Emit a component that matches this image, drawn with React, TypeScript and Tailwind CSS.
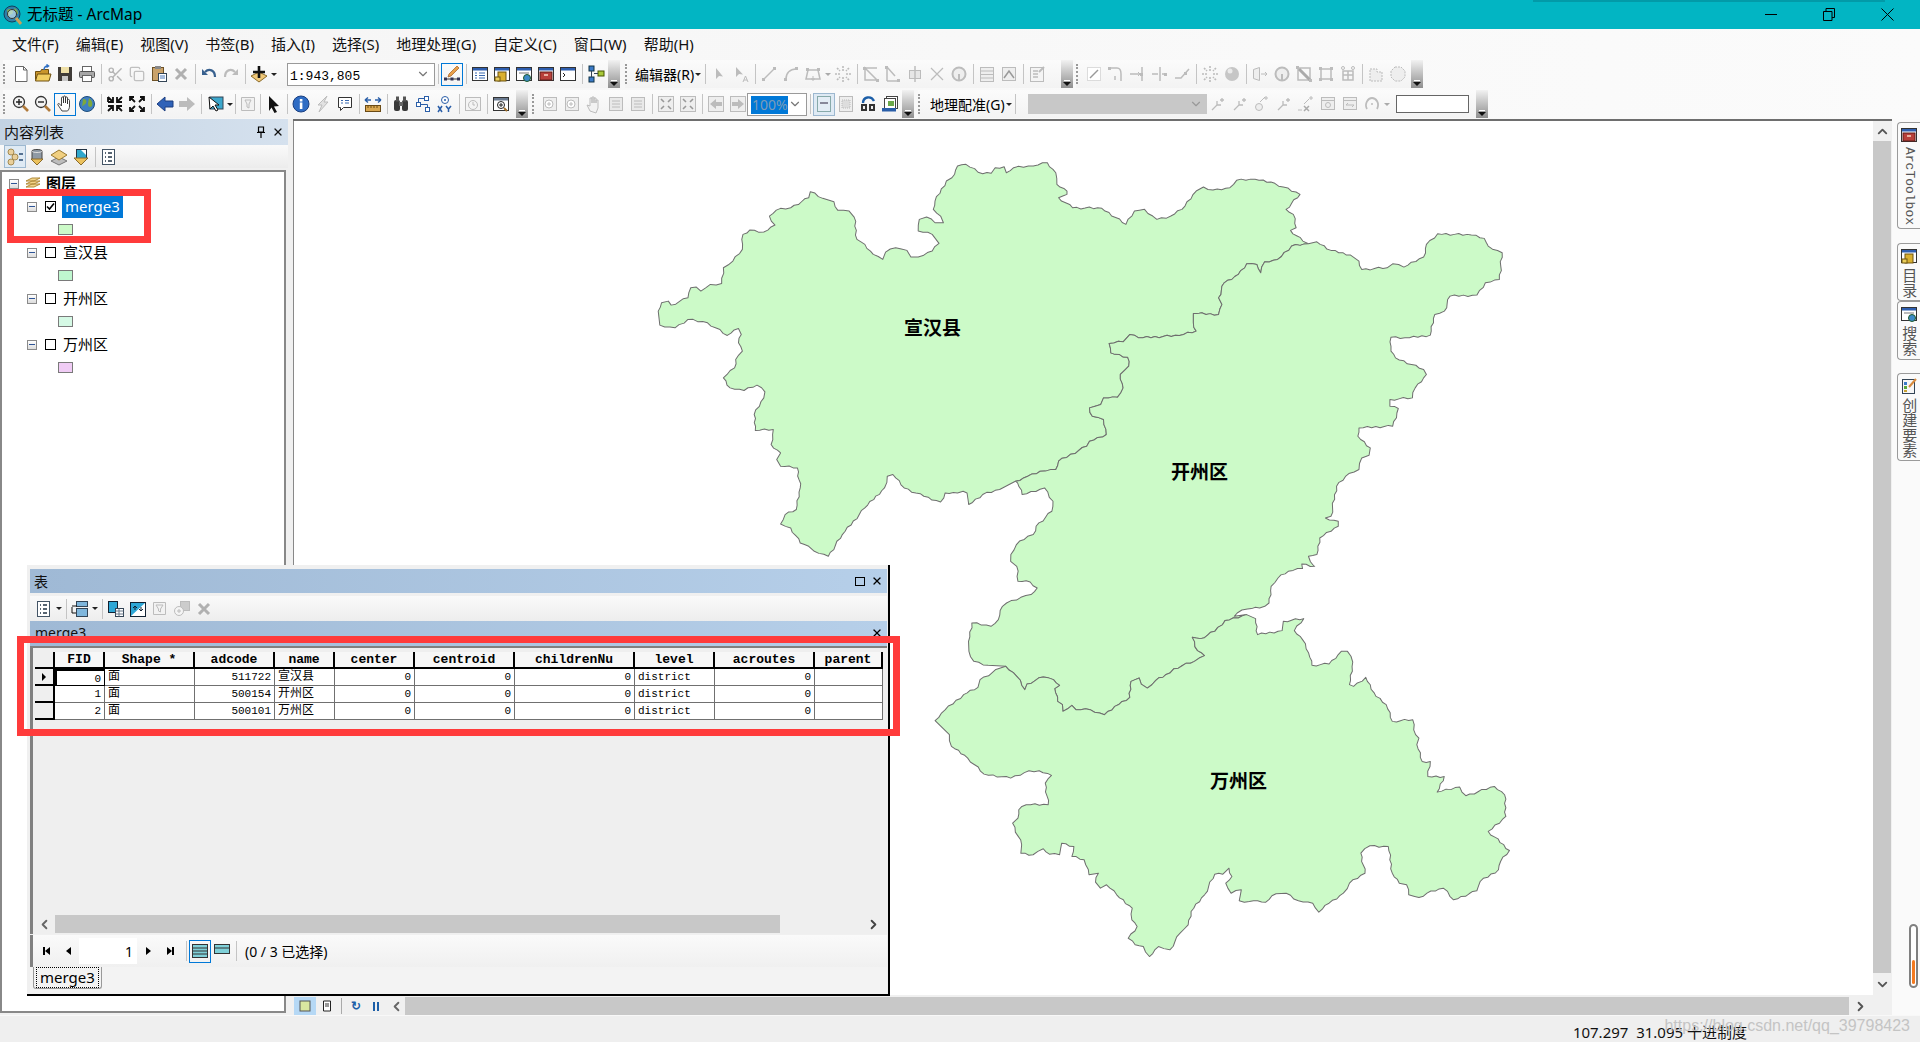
import type { ReactNode } from 'react';
import { ChevronDown, ChevronLeft, ChevronRight, ChevronUp, Copy, Scissors, X } from 'lucide-react';

const G = '#bcbcbc';

const Win = ({ children, top = '#2f5fb0' }: { children?: ReactNode; top?: string }) => (
  <>
    <rect x="2.5" y="3.5" width="15" height="13" fill="#fff" stroke="#333" />
    <rect x="3" y="4" width="14" height="2.5" fill={top} />
    {children}
  </>
);

const NodeLine = ({ d }: { d: string }) => <path d={d} fill="none" stroke={G} strokeWidth="1.5" />;
const Sq = ({ x, y }: { x: number; y: number }) => <rect x={x} y={y} width="3" height="3" fill={G} />;

const Glass = ({ sign }: { sign?: 'in' | 'out' }) => (
  <>
    <circle cx="8" cy="8" r="5.5" fill="#f4f4f4" stroke="#333" strokeWidth="1.3" />
    <path d="M12 12l5 5" stroke="#b07a3a" strokeWidth="2.6" />
    <path d={sign === 'in' ? 'M5 8h6M8 5v6' : 'M5 8h6'} stroke="#222" strokeWidth="1.4" />
  </>
);

const icons: Record<string, ReactNode> = {
  newfile: (<><path d="M4.5 2.5h8l3.5 3.5v11.500H4.500z" fill="#fff" stroke="#666" /><path d="M12.500 2.500v3.500h3.500" fill="none" stroke="#666" /></>),
  open: (<><path d="M2.500 7.500h5l1-2h7v10h-13z" fill="#c9962c" stroke="#6e4f10" /><path d="M2.500 17l2-7h13.500l-2 7z" fill="#f1cf62" stroke="#6e4f10" /><path d="M11 6c0-3 2-4 4-4M13.500 0.500l2 1.500-2 1.500" fill="none" stroke="#2e6fc4" strokeWidth="1.500" /></>),
  save: (<><rect x="3" y="3" width="14" height="14" fill="#403c38" /><rect x="6" y="3" width="8" height="6" fill="#efe0a8" /><rect x="7" y="12" width="6" height="5" fill="#c8c8c8" /></>),
  print: (<><rect x="5.500" y="2.500" width="9" height="5" fill="#fff" stroke="#666" /><rect x="2.500" y="7.500" width="15" height="6" rx="1" fill="#a8a8a8" stroke="#555" /><rect x="5.500" y="11.500" width="9" height="6" fill="#fff" stroke="#666" /></>),
  paste: (<><rect x="3.500" y="3.500" width="11" height="13" fill="#c9a26a" stroke="#6e5226" /><rect x="6" y="2" width="6" height="3" fill="#888" /><rect x="9.500" y="9.500" width="8" height="8" fill="#fff" stroke="#345" /><path d="M11 12h5M11 14h5" stroke="#4a78b8" /></>),
  del: <path d="M5 5l10 10M15 5L5 15" stroke="#b0b0b0" strokeWidth="3" />,
  undo: (<><path d="M6 8c4-4 10-2 10 5" fill="none" stroke="#39618f" strokeWidth="2.200" /><path d="M3 5v6h6z" fill="#39618f" /></>),
  redo: (<><path d="M14 8c-4-4-10-2-10 5" fill="none" stroke={G} strokeWidth="2.200" /><path d="M17 5v6h-6z" fill={G} /></>),
  add: (<><path d="M10 8l8 4-8 6-8-6z" fill="#f0c878" stroke="#8a6a2a" /><path d="M10 2v12M4 8h12" stroke="#111" strokeWidth="2.600" /></>),
  edit: (<><path d="M3 15h14" stroke="#333" /><rect x="2" y="13.500" width="3" height="3" fill="#335" /><rect x="8.500" y="13.500" width="3" height="3" fill="#335" /><rect x="15" y="13.500" width="3" height="3" fill="#335" /><path d="M7 10l8-8 2 2-8 8-3 1z" fill="#e9a04a" stroke="#a05a20" strokeWidth="0.700" /></>),
  toc: (<Win><path d="M5 9h2M9 9h6M5 11.500h2M9 11.500h6M5 14h2M9 14h6" stroke="#3a6ab0" /></Win>),
  cat: (<Win><rect x="6" y="8" width="8" height="9" fill="#d9b030" stroke="#6e5510" /><rect x="3" y="13" width="5" height="4" fill="#e9cd5a" stroke="#6e5510" /></Win>),
  search: (<Win><rect x="5" y="8" width="10" height="2" fill="#bbb" /><circle cx="13" cy="14" r="3.500" fill="#3c8ac8" stroke="#1d5a2a" /></Win>),
  tool: (<Win><rect x="4" y="8" width="12" height="8" fill="#b8403a" stroke="#601c18" /><rect x="8" y="10" width="4" height="2" fill="#e8b0a0" /></Win>),
  py: (<Win><path d="M5 9l2 2-2 2" fill="none" stroke="#222" /></Win>),
  model: (<><rect x="3" y="2" width="5" height="5" fill="#3a7ac8" stroke="#134" /><rect x="3" y="13" width="5" height="5" fill="#3a7ac8" stroke="#134" /><rect x="12" y="7" width="6" height="5" fill="#a8c838" stroke="#450" /><path d="M5.500 7v6M8 9.500h4" stroke="#345" /></>),
  tocdraw: (<><circle cx="6" cy="5" r="3" fill="#e9cf9a" stroke="#a58a50" /><circle cx="10" cy="10" r="3" fill="#e9cf9a" stroke="#a58a50" /><circle cx="6" cy="15" r="3" fill="#e9cf9a" stroke="#a58a50" /><path d="M14 7h4M14 13h4" stroke="#2a4a70" strokeWidth="1.500" /></>),
  dbase: (<><path d="M5 4c0-2 10-2 10 0v8c0 2-10 2-10 0z" fill="#8f9aa5" stroke="#444" /><path d="M5 4c0 2 10 2 10 0" fill="none" stroke="#ddd" /><path d="M4 12h12l-6 6z" fill="#ecc25e" stroke="#8a6a2a" /></>),
  dbase2: (<><path d="M10 10l8 4-8 4-8-4z" fill="#bdbdbd" stroke="#777" /><path d="M10 3l8 5-8 5-8-5z" fill="#f0cf80" stroke="#9a7a30" /></>),
  dbase3: (<><rect x="5.500" y="2.500" width="10" height="10" fill="#30a8cc" stroke="#234" /><path d="M10 3h5v5z" fill="#fff" /><path d="M3 11h14l-7 7z" fill="#ecc25e" stroke="#8a6a2a" /></>),
  dform2: (<><rect x="3.500" y="3.500" width="12" height="14" fill="#f6f6f6" stroke="#345" /><rect x="5" y="6" width="3" height="3" fill="#3a7ac8" /><rect x="5" y="10" width="3" height="3" fill="#5aa83c" /><rect x="5" y="14" width="3" height="2" fill="#c8a030" /><path d="M10 11l7-8" stroke="#d88a3c" strokeWidth="2" /></>),
  zoomin: <Glass sign="in" />,
  zoomout: <Glass sign="out" />,
  hand: <path d="M7 17l-4-6c-.7-1.500.8-2 1.800-.8L6.500 12V4c0-1.500 2-1.500 2 0v5-6c0-1.500 2-1.500 2 0v6-5c0-1.500 2-1.500 2 0v6-3.500c0-1.400 2-1.400 2 0V12c0 2.500-1 4-2 5z" fill="#fff" stroke="#333" strokeWidth="0.900" />,
  globe: (<><circle cx="10" cy="10" r="7.500" fill="#3f7fc2" stroke="#1c4c7c" /><path d="M6 5c3 0 4 2 3 4s-4 2-4 5M12 4c3 2 4 5 3 8-2 2-4 1-4-2s1-4 1-6z" fill="#7da83c" /></>),
  fin: <path d="M3 3l5 5M3 8V3h0M8 3v5H3M17 3l-5 5M12 3v5h5M3 17l5-5M3 12h5v5M17 17l-5-5M17 12h-5v5" fill="none" stroke="#111" strokeWidth="1.800" />,
  fout: <path d="M8 8L3 3M3 7V3h4M12 8l5-5M17 7V3h-4M8 12l-5 5M3 13v4h4M12 12l5 5M17 13v4h-4" fill="none" stroke="#111" strokeWidth="1.800" />,
  back: <path d="M2 10l8-7v4h8v6h-8v4z" fill="#2f62b8" stroke="#1c3e80" />,
  fwd: <path d="M18 10l-8-7v4H2v6h8v4z" fill={G} />,
  selel: (<><rect x="5" y="3" width="13" height="12" fill="#3ca7cc" stroke="#345" /><path d="M4 3l1 12 3-3 3 5 2-1-3-5h4z" fill="#fff" stroke="#111" /></>),
  filt: <path d="M3.500 3.500h13v13h-13zM7 6h6l-2 4v4l-2-1v-3z" fill="#f2f2f2" stroke={G} />,
  arrow: <path d="M6 2l10 10-5 .5 3 5.500-2.500 1-3-5.500L6 17z" fill="#111" />,
  info: (<><circle cx="10" cy="10" r="8" fill="#2e6cc4" stroke="#1a3f80" /><rect x="8.800" y="8.500" width="2.600" height="6.500" fill="#fff" /><rect x="8.800" y="5" width="2.600" height="2.500" fill="#fff" /></>),
  bolt: <path d="M14 2L5 11h4l-3 7 9-10h-4z" fill="#e2e2e2" stroke={G} />,
  msg: (<><path d="M3.500 3.500h13v10h-8l-3 3v-3h-2z" fill="#fff" stroke="#333" /><path d="M6 6.500h2M10 6.500h4M6 9h2M10 9h4" stroke="#3a6ab0" /></>),
  measure: (<><path d="M2 6h6M12 6h6M2 6l3-2.500M2 6l3 2.500M18 6l-3-2.500M18 6l-3 2.500" fill="none" stroke="#2a5ea8" strokeWidth="1.500" /><rect x="2.500" y="11.500" width="15" height="6" fill="#d9a750" stroke="#6a4a15" /><path d="M5 12v2M8 12v2M11 12v2M14 12v2" stroke="#6a4a15" /></>),
  bino: (<><rect x="3" y="6" width="6" height="11" rx="2" fill="#3a3a3a" /><rect x="11" y="6" width="6" height="11" rx="2" fill="#3a3a3a" /><rect x="5" y="2.500" width="3" height="5" fill="#555" /><rect x="12" y="2.500" width="3" height="5" fill="#555" /><rect x="8" y="8" width="4" height="4" fill="#666" /></>),
  route: (<><rect x="11.500" y="2.500" width="4" height="4" fill="#fff" stroke="#2a5ea8" /><rect x="3.500" y="8.500" width="4" height="4" fill="#fff" stroke="#2a5ea8" /><rect x="12.500" y="13.500" width="4" height="4" fill="#fff" stroke="#2a5ea8" /><path d="M5.500 8.500V4.500h6M7.500 10.500h7v3" fill="none" stroke="#2a5ea8" /></>),
  xy: (<><circle cx="10" cy="6" r="3.500" fill="#fff" stroke="#2a5ea8" /><circle cx="10" cy="6" r="1" fill="#2a5ea8" /><path d="M3 12l4 6M7 12l-4 6M11 12l2.500 3 2.500-3M13.500 15v3" fill="none" stroke="#2a5ea8" strokeWidth="1.500" /></>),
  clock: (<><rect x="2.500" y="3.500" width="15" height="13" fill="#f4f4f4" stroke={G} /><circle cx="10" cy="11" r="4.500" fill="none" stroke={G} /><path d="M10 8v3h2" fill="none" stroke={G} /></>),
  winzoom: (<Win top="#6a7a90"><circle cx="10" cy="11" r="3.500" fill="#fff" stroke="#222" /><path d="M8 11h4M10 9v4" stroke="#222" /><path d="M13 14l3 3" stroke="#a0702a" strokeWidth="2" /></Win>),
  dzi: (<><rect x="3.500" y="3.500" width="13" height="13" fill="#eee" stroke={G} /><circle cx="9" cy="10" r="4" fill="#fff" stroke={G} /><path d="M7 10h4M9 8v4" stroke={G} /></>),
  dhand: <path d="M6 17L3 11l3 1V4h2v5-6h2v6-5h2v5-3h2v8l-2 5z" fill="#f2f2f2" stroke={G} />,
  dbox: (<><rect x="3.500" y="3.500" width="13" height="13" fill="#e9e9e9" stroke={G} /><path d="M6 7h8M6 10h8M6 13h8" stroke={G} /></>),
  dfin: (<><rect x="2.500" y="2.500" width="15" height="15" fill="#eee" stroke={G} /><path d="M5 5l3 3M15 5l-3 3M5 15l3-3M15 15l-3-3" stroke="#999" strokeWidth="1.600" /></>),
  dback: (<><rect x="2.500" y="2.500" width="15" height="15" fill="#eee" stroke={G} /><path d="M4 10l6-5v3h6v4h-6v3z" fill={G} /></>),
  dfwd: (<><rect x="2.500" y="2.500" width="15" height="15" fill="#eee" stroke={G} /><path d="M16 10l-6-5v3H4v4h6v3z" fill={G} /></>),
  layout: (<><rect x="3.500" y="2.500" width="13" height="15" fill="#e4edf5" stroke="#8aa" /><rect x="6" y="8" width="8" height="2" fill="#889" /></>),
  dlayout: (<><rect x="3.500" y="2.500" width="13" height="15" fill="#eee" stroke={G} /><rect x="6" y="6" width="8" height="8" fill="#ddd" stroke={G} strokeDasharray="1 1" /></>),
  lock: (<><path d="M5 9c0-6 8-8 11-2" fill="none" stroke="#1d5fa8" strokeWidth="2.400" /><rect x="3" y="10" width="6" height="7" fill="#333" /><rect x="11" y="10" width="6" height="7" fill="#333" /><rect x="5" y="12" width="2" height="3" fill="#eee" /><rect x="13" y="12" width="2" height="3" fill="#eee" /></>),
  pages: (<><rect x="6.500" y="2.500" width="11" height="12" fill="#fff" stroke="#444" /><rect x="4.500" y="4.500" width="11" height="10" fill="#fff" stroke="#444" /><rect x="8" y="7" width="6" height="5" fill="#6ba84a" /><rect x="2" y="14" width="14" height="3.500" fill="#2a5ea8" /></>),
  dcursor: <path d="M7 4v11l3-3 4 .5z" fill={G} />,
  dcursora: (<><path d="M5 3v10l3-3 4 .5z" fill={G} /><path d="M12 18l2.500-6 2.500 6M13 16h3" fill="none" stroke={G} /></>),
  dline: (<><NodeLine d="M5 15L15 5" /><Sq x={3} y={14} /><Sq x={14} y={3} /></>),
  darc: (<><NodeLine d="M5 15C5 9 9 5 15 5" /><Sq x={3} y={14} /><Sq x={14} y={3} /></>),
  dpoly: (<><NodeLine d="M5 6h10l2 9H3z" /><Sq x={3} y={4} /><Sq x={14} y={4} /><path d="M10 12v5M8 15h4" stroke={G} /></>),
  dstar: <path d="M10 2v5M10 13v5M2 10h5M13 10h5M4 4l3 3M16 4l-3 3M4 16l3-3M16 16l-3-3" stroke={G} strokeWidth="1.600" strokeDasharray="2 1" />,
  dtri: (<><NodeLine d="M4 4l12 12H4zM4 4h12" /><Sq x={2} y={3} /><Sq x={15} y={15} /></>),
  dsplit: (<><NodeLine d="M4 3v14M4 3l8 9M4 17h12" /><Sq x={14} y={15} /><Sq x={2} y={2} /></>),
  dcross: (<><rect x="4.500" y="6.500" width="11" height="8" fill="#e6e6e6" stroke={G} /><path d="M10 2v16" stroke={G} strokeWidth="1.500" /></>),
  dx: <path d="M4 16L16 4M4 4l12 12" stroke={G} strokeWidth="1.200" />,
  dcurve: (<><circle cx="10" cy="10" r="6.500" fill="#eee" stroke={G} strokeWidth="2" /><path d="M10 10v7" stroke={G} strokeWidth="2" /></>),
  dtable: (<><rect x="3.500" y="3.500" width="13" height="14" fill="#eee" stroke={G} /><path d="M3.500 7h13M3.500 10.500h13M3.500 14h13" stroke={G} /></>),
  dpeak: (<><rect x="3.500" y="3.500" width="13" height="13" fill="#eee" stroke={G} /><path d="M5 14l5-7 5 7" fill="none" stroke="#999" strokeWidth="1.500" /></>),
  dform: (<><rect x="3.500" y="3.500" width="13" height="14" fill="#f4f4f4" stroke={G} /><path d="M6 7h5M6 10h5M6 13h5" stroke={G} strokeWidth="1.500" /><path d="M12 8l5-5" stroke={G} strokeWidth="2" /></>),
  ddot: (<><rect x="3.500" y="3.500" width="13" height="13" fill="#fff" stroke={G} strokeDasharray="1 1" /><path d="M6 14l8-8" stroke="#999" strokeWidth="1.500" /></>),
  dcorner: (<><NodeLine d="M3 4h8c3 0 4 3 4 6v7M9 12v4" /><Sq x={2} y={3} /></>),
  dext: (<><NodeLine d="M2 10h10M14 3v14" /><Sq x={12} y={9} /><path d="M10 8l2 2-2 2" stroke={G} fill="none" /></>),
  dtrim: (<><NodeLine d="M2 10h6M12 10h4M10 3v14" /><Sq x={14} y={9} /></>),
  dangle: (<><NodeLine d="M3 14h6l8-9" /><Sq x={12} y={8} /></>),
  dball: (<><circle cx="10" cy="10" r="7" fill="#c6c6c6" /><circle cx="8" cy="7" r="2.500" fill="#eaeaea" /></>),
  dflip: (<><path d="M3.500 5.500l6-2v13l-6-2z" fill="#eee" stroke={G} /><path d="M11 10h6M15 8l2 2-2 2" stroke={G} fill="none" /></>),
  dpencil: (<><NodeLine d="M4 4h12v12H4z" /><path d="M5 5l11 11" stroke="#aaa" strokeWidth="3" /><Sq x={2} y={2} /><Sq x={15} y={15} /></>),
  dfour: (<><NodeLine d="M5 5h10v10H5z" /><Sq x={3} y={3} /><Sq x={14} y={3} /><Sq x={3} y={14} /><Sq x={14} y={14} /></>),
  dcup: (<><NodeLine d="M5 7h10v9H5zM10 7v9M5 11h10" /><circle cx="5" cy="4" r="1.500" fill="none" stroke={G} /><circle cx="15" cy="4" r="1.500" fill="none" stroke={G} /></>),
  dmerge: <path d="M4 5h7v3h5v9H4z" fill="#eee" stroke={G} strokeDasharray="2 1" />,
  doct: <path d="M7 3h6l4 4v6l-4 4H7l-4-4V7z" fill="#eee" stroke={G} strokeDasharray="2 1" />,
  dgeo: <path d="M4 16l5-5M9 11V7M9 11h4M14 4v4M12 6h4" stroke={G} strokeWidth="1.300" fill="none" />,
  dgeoz: (<><path d="M8 8l5-5M14 2v4M12 4h4" stroke={G} fill="none" /><circle cx="7" cy="13" r="3.500" fill="#eee" stroke={G} /></>),
  dgeox: (<><path d="M8 10l5-5M15 2v4M13 4h4M2 16h4" stroke={G} fill="none" /><path d="M8 12l5 5M13 12l-5 5" stroke="#aaa" strokeWidth="1.500" /></>),
  dcal: (<><rect x="3.500" y="3.500" width="13" height="12" fill="#eee" stroke={G} /><path d="M3.500 6.500h13" stroke={G} /><circle cx="10" cy="11" r="2.500" fill="none" stroke={G} /></>),
  dcal2: (<><rect x="3.500" y="3.500" width="13" height="12" fill="#eee" stroke={G} /><path d="M3.500 6.500h13M6 11h8M6 11l2-2M14 11l-2 2" stroke={G} fill="none" /></>),
  drot: (<><path d="M5 15c-3-5 1-11 5-11s8 5 5 11" fill="none" stroke={G} strokeWidth="1.800" /><circle cx="10" cy="10" r="1" fill={G} /></>),
  tlist: (<><rect x="3.500" y="2.500" width="12" height="15" fill="#fff" stroke="#456" /><path d="M6 6h1M9 6h4M6 10h1M9 10h4M6 14h1M9 14h4" stroke="#234" strokeWidth="1.300" /></>),
  trel: (<><rect x="6.500" y="2.500" width="11" height="5" fill="#7fb6dc" stroke="#345" /><rect x="6.500" y="9.500" width="11" height="8" fill="#7fb6dc" stroke="#345" /><path d="M2 7h5M6 14H2V8" fill="none" stroke="#111" /></>),
  tsel: (<><rect x="2.500" y="2.500" width="9" height="11" fill="#2ea7d6" stroke="#123" /><rect x="9.500" y="9.500" width="8" height="8" fill="#fff" stroke="#345" /><path d="M9.500 12h8M9.500 15h8M13 9.500v8" stroke="#678" /></>),
  tsw: (<><rect x="2.500" y="3.500" width="15" height="14" fill="#2ea7d6" stroke="#123" /><path d="M3 17L17 4V17z" fill="#fff" /><path d="M7 11V7M5 9l2-2 2 2M13 8v4M11 10l2 2 2-2" fill="none" stroke="#123" /></>),
  tfilt: <path d="M3.500 3.500h12v12h-12zM6 6h7l-2.500 4v3l-2-1v-2z" fill="#f2f2f2" stroke={G} />,
  tzoom: (<><rect x="8.500" y="2.500" width="9" height="9" fill="#ccc" stroke={G} /><circle cx="7" cy="12" r="4.500" fill="#f4f4f4" stroke={G} /><path d="M5 12h4M7 10v4" stroke={G} /></>),
  pdata: (<><rect x="2.500" y="3.500" width="15" height="13" fill="#7fd0d8" stroke="#333" /><path d="M2.500 7h15M2.500 10h15M2.500 13h15" stroke="#333" /></>),
  psel: (<><rect x="2.500" y="3.500" width="15" height="9" fill="#7fd0d8" stroke="#333" /><path d="M2.500 7h15" stroke="#333" /></>),
};

const Ico = ({ n }: { n: string }) => {
  if (n === 'cut') return <Scissors size={17} color="#b5b5b5" />;
  if (n === 'copy') return <Copy size={16} color="#c0c0c0" />;
  return (
    <svg width="20" height="20" viewBox="0 0 20 20">
      {icons[n]}
    </svg>
  );
};

const Sep = ({ narrow }: { narrow?: boolean }) => (
  <div className={`flex h-full shrink-0 items-center justify-center ${narrow ? 'w-[3px]' : 'w-[6px]'}`}>
    <div className="h-[20px] w-px bg-[#c4c4c4]" />
  </div>
);

const Caret = () => (
  <div className="flex w-[8px] shrink-0 items-center justify-center">
    <div className="h-0 w-0 border-x-[3px] border-t-[3px] border-x-transparent border-t-[#222]" />
  </div>
);

const GrayCaret = () => (
  <div className="flex w-[8px] shrink-0 items-center justify-center">
    <div className="h-0 w-0 border-x-[3px] border-t-[3px] border-x-transparent border-t-[#aaa]" />
  </div>
);

const Btn = ({ n, active, soft }: { n: string; active?: boolean; soft?: boolean }) => (
  <div
    className={`flex h-[23px] w-[22px] shrink-0 items-center justify-center ${active ? 'border border-[#0078d7]' : ''} ${soft ? 'border border-[#9db8d0] bg-[#dfeaf4]' : ''}`}
  >
    <Ico n={n} />
  </div>
);

// tokens: name = icon, | = separator, ! = narrow separator, v = caret, w = grey caret, * on the end = pressed, ~ = pressed and disabled
const Tools = ({ list }: { list: string }) => (
  <>
    {list.split(' ').map((t, i) => {
      if (t === '|') return <Sep key={i} />;
      if (t === '!') return <Sep key={i} narrow />;
      if (t === 'v') return <Caret key={i} />;
      if (t === 'w') return <GrayCaret key={i} />;
      if (t.endsWith('*')) return <Btn key={i} n={t.slice(0, -1)} active />;
      if (t.endsWith('~')) return <Btn key={i} n={t.slice(0, -1)} soft />;
      return <Btn key={i} n={t} />;
    })}
  </>
);

const Dots = () => (
  <div className="flex h-full w-[7px] shrink-0 items-center">
    <div className="h-[20px] border-l-2 border-dotted border-[#999]" />
  </div>
);

const Grip = () => (
  <div className="ml-auto flex h-full w-[12px] shrink-0 flex-col items-center justify-end bg-linear-to-b from-[#f2f2f2] to-[#8f8f8f] pb-[2px]">
    <div className="mb-px h-px w-[6px] bg-white" />
    <div className="h-0 w-0 border-x-[4px] border-t-[4px] border-x-transparent border-t-[#111]" />
  </div>
);

const Chunk = ({ className, children }: { className: string; children: ReactNode }) => (
  <div className={`flex h-full shrink-0 items-center bg-linear-to-b from-[#fbfbfb] to-[#f3f3f3] ${className}`}>{children}</div>
);

const Combo = ({ className, children }: { className: string; children?: ReactNode }) => (
  <div className={`flex shrink-0 items-center border border-[#9a9a9a] bg-white ${className}`}>
    <div className="flex-1 overflow-hidden">{children}</div>
    <ChevronDown size={14} color="#777" className="mr-[4px]" />
  </div>
);

const menus = ['文件(F)', '编辑(E)', '视图(V)', '书签(B)', '插入(I)', '选择(S)', '地理处理(G)', '自定义(C)', '窗口(W)', '帮助(H)'];

const layers = [
  { name: '宣汉县', color: 'bg-[#bff7cf]' },
  { name: '开州区', color: 'bg-[#d5f9e5]' },
  { name: '万州区', color: 'bg-[#f0ccf5]' },
];

const Minus = () => (
  <div className="flex h-[10px] w-[10px] shrink-0 items-center justify-center border border-[#8a8a8a] bg-linear-to-b from-white to-[#dcdcdc]">
    <div className="h-px w-[6px] bg-[#2f5597]" />
  </div>
);

const Patch = ({ color }: { color: string }) => <div className={`ml-[58px] h-[11px] w-[15px] border border-[#7a7a7a] ${color}`} />;

// outlines traced off the reference, first block in 880x420 crop units, second in 640x400 crop units
const north = [[32,480],[38,455],[50,450],[55,462],[85,440],[90,410],[100,408],[108,420],[125,400],[145,397],[148,350],[165,330],[182,295],[183,250],[195,237],[220,243],[240,222],[230,195],[250,172],[268,170],[300,140],[303,122],[325,142],[345,152],[352,178],[372,180],[381,198],[386,265],[400,280],[415,310],[432,325],[437,303],[455,290],[475,298],[482,318],[495,318],[520,300],[532,277],[520,250],[495,240],[497,205],[510,198],[525,215],[540,215],[535,195],[522,175],[525,150],[545,90],[555,80],[565,45],[580,40],[610,68],[625,67],[632,50],[648,47],[652,65],[665,50],[700,45],[725,35],[740,65],[742,100],[760,120],[760,130],[745,140],[770,170],[822,172],[865,220],[880,180],[898,175],[920,205],[945,195],[970,165],[990,120],[1003,108],[1020,117],[1050,110],[1062,88],[1095,85],[1130,97],[1175,130],[1150,175],[1163,190],[1168,230],[1158,238],[1180,270]];
const shared = [[1190,278],[1160,285],[1135,325],[1112,332],[1105,365],[1098,340],[1080,338],[1065,370],[1040,395],[1030,440],[1036,460],[1030,490],[985,487],[985,515],[990,540],[960,553],[895,560],[872,550],[860,572],[835,577],[838,605],[868,618],[870,645],[855,670],[860,710],[850,738],[825,740],[820,760],[800,770],[805,795],[825,805],[830,850],[800,870],[795,885],[745,930],[740,955],[712,960],[690,975],[668,990]];
const south = [[640,1015],[610,1030],[585,1060],[582,1025],[575,1020],[565,1025],[543,1025],[535,1052],[505,1035],[470,1010],[450,970],[440,975],[435,1010],[400,1070],[360,1150],[335,1215],[310,1200],[300,1185],[285,1175],[268,1130],[250,1118],[258,1090],[278,1075],[285,1010],[280,950],[250,945],[243,925],[250,905],[233,880],[237,835],[205,838],[203,790],[220,740],[222,722],[208,702],[185,718],[160,710],[148,680],[168,650],[170,625],[182,600],[175,575],[180,550],[175,532],[155,553],[120,515],[85,505],[62,530],[35,522]];
const kaiEast = [[1205,272],[1230,298],[1265,312],[1280,330],[1285,355],[1330,350],[1340,338],[1360,348],[1395,318],[1400,280],[1420,248],[1480,252],[1503,262],[1510,285],[1535,305],[1530,385],[1505,395],[1490,432],[1442,435],[1432,480],[1415,490],[1407,552],[1370,560],[1337,558],[1337,600],[1345,620],[1395,655],[1400,670],[1380,710],[1375,740],[1335,745],[1335,765],[1350,772],[1340,825],[1280,830],[1278,855],[1300,890],[1298,912],[1285,920],[1280,955],[1262,967],[1240,1005],[1230,1095],[1220,1100],[1243,1110],[1243,1125],[1210,1160],[1205,1210],[1190,1215],[1200,1245]];
const kaiWest = [[660,1210],[670,1180],[690,1155],[700,1150],[705,1125],[733,1080],[735,1050],[720,1010],[680,1030],[672,995]];
const border2 = [[258,315],[285,345],[305,385],[310,368],[350,347],[375,355],[390,372],[378,382],[385,420],[397,430],[398,450],[420,432],[430,445],[465,445],[500,460],[525,435],[562,408],[565,360],[585,350],[590,368],[605,380],[625,358],[660,335],[670,322],[720,300],[745,283],[728,268],[715,228],[735,232],[770,210],[795,178],[848,160]];
const kaiLowW = [[270,0],[285,15],[288,60],[318,62],[335,80],[320,100],[295,108],[260,125],[250,135],[240,175],[222,195],[175,185],[167,240],[168,270],[180,300],[215,312]];
const kaiLowE = [[818,165],[825,155],[850,143],[880,140],[903,125],[908,75],[925,50],[950,30],[985,22],[983,8],[1015,15]];
const wanWest = [[85,478],[110,445],[155,400],[190,378],[195,355],[245,320]];
const wanRest = [[870,172],[875,220],[935,208],[938,180],[988,172],[965,208],[985,235],[1000,275],[1008,312],[1050,308],[1080,270],[1095,270],[1108,302],[1100,370],[1110,375],[1140,348],[1165,405],[1190,430],[1205,480],[1255,475],[1262,520],[1270,530],[1265,550],[1278,600],[1298,600],[1292,645],[1332,645],[1315,692],[1370,677],[1385,703],[1455,675],[1480,700],[1483,765],[1440,810],[1492,867],[1470,900],[1465,925],[1420,960],[1412,988],[1355,1015],[1330,980],[1290,995],[1270,1008],[1245,1000],[1240,970],[1222,965],[1205,935],[1195,855],[1150,853],[1128,875],[1138,935],[1100,965],[1085,995],[1050,1025],[1025,1052],[1010,1025],[975,1018],[945,995],[920,997],[895,1022],[875,1018],[855,1020],[830,1018],[835,985],[810,995],[797,965],[812,945],[805,920],[790,938],[770,938],[745,1000],[712,1050],[705,1090],[685,1115],[660,1165],[632,1155],[610,1185],[595,1155],[575,1150],[558,1130],[580,1095],[567,1075],[568,1040],[530,1000],[505,970],[490,980],[478,962],[485,935],[462,940],[450,895],[420,885],[425,855],[395,845],[390,880],[365,878],[350,862],[325,880],[295,875],[297,850],[275,785],[288,770],[290,745],[308,730],[362,730],[355,665],[370,642],[340,628],[315,628],[270,650],[205,638],[165,590],[125,555],[120,520]];

const p1 = (a: number[][]) => a.map(([x, y]) => [640 + x * 0.5612, 150 + y / 3]);
const p2 = (a: number[][]) => a.map(([x, y]) => [900 + x * 0.408, 560 + y / 3]);

// the real boundaries are finely crinkled, so break long segments into small steps
const crinkle = (a: number[][]) => {
  const out: number[][] = [];
  a.forEach(([x, y], i) => {
    out.push([x, y]);
    const q = a[i + 1];
    if (!q) return;
    const dx = q[0] - x;
    const dy = q[1] - y;
    const d = Math.hypot(dx, dy);
    const n = Math.floor(d / 4);
    for (let k = 1; k < n; k++) {
      const s = (((i * 7 + k * 13) % 5) - 2) * 0.5;
      out.push([x + (dx * k) / n - (dy / d) * s, y + (dy * k) / n + (dx / d) * s]);
    }
  });
  return out;
};

const str = (a: number[][]) => a.map(([x, y]) => `${x.toFixed(1)},${y.toFixed(1)}`).join(' ');

const sharedEdge = crinkle(p1(shared));
const lowerEdge = crinkle(p2(border2));

const xuanhan = str([...crinkle(p1(north)), ...sharedEdge, ...crinkle(p1(south))]);
const kaizhou = str([
  ...[...sharedEdge].reverse(),
  ...crinkle(p1(kaiEast)),
  ...[...crinkle(p2(kaiLowE))].reverse(),
  ...[...lowerEdge].reverse(),
  ...[...crinkle(p2(kaiLowW))].reverse(),
  ...crinkle(p1(kaiWest)),
]);
const wanzhou = str([...crinkle(p2(wanWest)), ...lowerEdge, ...crinkle(p2(wanRest))]);

const MapView = () => (
  <svg className="min-h-0 w-full flex-1 bg-white" viewBox="294 120 1578 875" preserveAspectRatio="xMinYMin slice">
    <g fill="#ccfac8" stroke="#6e6e6e" strokeWidth="1" strokeLinejoin="round">
      <polygon points={xuanhan} />
      <polygon points={kaizhou} />
      <polygon points={wanzhou} />
    </g>
    <g fontSize="19" fontWeight="700" fill="#000" textAnchor="middle" fontFamily="'Noto Sans CJK SC', sans-serif">
      <text x="932" y="334">宣汉县</text>
      <text x="1199" y="478">开州区</text>
      <text x="1238" y="787">万州区</text>
    </g>
  </svg>
);

const cols = 'grid grid-cols-[20px_50px_90px_80px_60px_80px_100px_120px_80px_100px_68px]';

const headers = ['FID', 'Shape *', 'adcode', 'name', 'center', 'centroid', 'childrenNu', 'level', 'acroutes', 'parent'];

const rows = [
  { fid: 0, code: '511722', name: '宣汉县' },
  { fid: 1, code: '500154', name: '开州区' },
  { fid: 2, code: '500101', name: '万州区' },
];

const Cell = ({ right, className = '', children }: { right?: boolean; className?: string; children?: ReactNode }) => (
  <div className={`h-[17px] overflow-hidden whitespace-nowrap border-r border-b border-[#707070] bg-white px-[3px] text-[11px] leading-[16px] ${right ? 'text-right' : ''} ${className}`}>
    {children}
  </div>
);

const AttributeTable = () => (
  <div className="absolute left-[27px] top-[565px] flex h-[431px] w-[863px] flex-col border-r-2 border-b-2 border-black bg-[#f0f0f0] pl-[3px] pt-[4px] pr-px">
    <div className="flex h-[24px] shrink-0 items-center bg-linear-to-r from-[#9fb9d5] to-[#b6cfe9] pl-[4px] pr-[4px] text-[14px] text-[#111]">
      <span>表</span>
      <div className="ml-auto h-[9px] w-[10px] border-[1.5px] border-black" />
      <X size={12} strokeWidth={2.500} className="ml-[6px] text-black" />
    </div>
    <div className="mt-[3px] flex h-[25px] shrink-0 items-center bg-linear-to-b from-[#fafafa] to-[#ededed] pl-[3px]">
      <Tools list="tlist v | trel v | tsel tsw tfilt tzoom del" />
    </div>
    <div className="flex h-[25px] shrink-0 items-start bg-linear-to-r from-[#9fb9d5] to-[#b6cfe9] pl-[5px] pr-[4px] text-[14px] leading-[24px] text-[#111]">
      <span>merge3</span>
      <X size={12} strokeWidth={2.500} className="ml-auto mt-[6px] text-black" />
    </div>
    <div className="flex-1 border-t-2 border-l-[3px] border-[#808080] bg-[#efefef] pl-[2px] pt-[4px] font-['Liberation_Mono','Noto_Sans_CJK_SC',monospace] text-black">
      <div className={cols}>
        <div className="h-[17px] border-r-2 border-b-2 border-black bg-[#efefef]" />
        {headers.map((h) => (
          <div key={h} className="h-[17px] overflow-hidden whitespace-nowrap border-r-2 border-b-2 border-black bg-[#f7f7f7] text-center text-[13px] font-bold leading-[16px]">
            {h}
          </div>
        ))}
        {rows.map((r, i) => (
          <div key={r.fid} className="contents">
            <div className="flex h-[17px] items-center justify-center border-r-2 border-b-2 border-black bg-[#efefef]">
              {i === 0 && <div className="h-0 w-0 border-y-[4px] border-l-[4px] border-y-transparent border-l-black" />}
            </div>
            <Cell right className={i === 0 ? 'border-2 border-black' : ''}>{r.fid}</Cell>
            <Cell className="text-[12px]">面</Cell>
            <Cell right>{r.code}</Cell>
            <Cell className="text-[12px]">{r.name}</Cell>
            <Cell right>0</Cell>
            <Cell right>0</Cell>
            <Cell right>0</Cell>
            <Cell>district</Cell>
            <Cell right>0</Cell>
            <Cell />
          </div>
        ))}
      </div>
    </div>
    <div className="flex h-[20px] shrink-0 items-center border-l-[3px] border-[#808080] bg-[#efefef]">
      <div className="flex w-[22px] justify-center"><ChevronLeft size={15} strokeWidth={3} color="#666" /></div>
      <div className="h-[18px] w-[725px] bg-[#c8c8c8]" />
      <div className="ml-auto mr-[6px]"><ChevronRight size={15} strokeWidth={3} color="#444" /></div>
    </div>
    <div className="mt-px flex h-[32px] shrink-0 items-center border-l-[3px] border-[#808080] bg-linear-to-b from-[#fafafa] to-[#f0f0f0] pl-[2px] font-['Noto_Sans','Noto_Sans_CJK_SC',sans-serif] text-[14px] text-black">
      <div className="flex w-[22px] items-center justify-center">
        <div className="h-[8px] w-[2px] bg-black" />
        <div className="h-0 w-0 border-y-[4px] border-r-[5px] border-y-transparent border-r-black" />
      </div>
      <div className="flex w-[22px] items-center justify-center">
        <div className="h-0 w-0 border-y-[4px] border-r-[5px] border-y-transparent border-r-black" />
      </div>
      <div className="flex h-[26px] w-[58px] items-center justify-end bg-white pr-[4px]">1</div>
      <div className="flex w-[22px] items-center justify-center">
        <div className="h-0 w-0 border-y-[4px] border-l-[5px] border-y-transparent border-l-black" />
      </div>
      <div className="flex w-[22px] items-center justify-center">
        <div className="h-0 w-0 border-y-[4px] border-l-[5px] border-y-transparent border-l-black" />
        <div className="h-[8px] w-[2px] bg-black" />
      </div>
      <div className="ml-[2px]"><Sep /></div>
      <Btn n="pdata" active />
      <Btn n="psel" />
      <Sep />
      <span className="ml-[6px]">(0 / 3 已选择)</span>
    </div>
    <div className="flex h-[27px] shrink-0 items-start bg-[#f3f3f3] pl-[3px] font-['Noto_Sans',sans-serif] text-[15px] text-black">
      <div className="flex h-[22px] w-[69px] items-center justify-center rounded-b-[3px] border border-t-0 border-[#999] leading-none">
        <span className="border border-dotted border-black px-[3px] py-[2px]">merge3</span>
      </div>
    </div>
  </div>
);

const DockTab = ({ n, label, className, mono }: { n: string; label: string; className: string; mono?: boolean }) => (
  <div className={`flex w-[23px] flex-col items-center rounded-l-[4px] border border-r-0 border-[#9a9a9a] bg-[#fafafa] pt-[2px] ${className}`}>
    <Ico n={n} />
    <span className={`mt-[2px] text-[#555] [writing-mode:vertical-rl] ${mono ? "font-['Liberation_Mono',monospace] text-[13px]" : 'text-[15px]'}`}>{label}</span>
  </div>
);

export default function App() {
  return (
    <div className="relative flex h-[1042px] w-[1920px] flex-col overflow-hidden bg-[#f0f0f0] font-['Noto_Sans','Noto_Sans_CJK_SC',sans-serif] text-black">
      <div className="relative flex h-[29px] shrink-0 items-center bg-[#02b5c3] pl-[3px] text-[15.500px]">
        <svg width="20" height="22" viewBox="0 0 20 22">
          <circle cx="9" cy="10" r="8" fill="#2f7fa8" stroke="#123f5a" />
          <path d="M4 6c3-2 6-1 6 2s-4 2-5 5M11 4c3 1 4 3 4 6-2 0-3-3-4-6z" fill="#7fb04a" />
          <circle cx="9" cy="10" r="4.500" fill="#c8e4f0" fillOpacity="0.700" stroke="#333" />
          <path d="M13 14l5 6" stroke="#c9a25a" strokeWidth="3" />
        </svg>
        <span className="ml-[4px]">无标题 - ArcMap</span>
        <div className="absolute left-[1533px] top-0 h-[2px] w-[352px] bg-[#029aa8]" />
        <div className="ml-auto flex h-full items-center">
          <div className="h-px w-[12px] bg-black" />
          <svg width="12" height="13" viewBox="0 0 12 13" className="ml-[46px]">
            <path d="M0.500 3.500h8.500v9H0.500zM3 3.500V0.500h8.500v9H9" fill="none" stroke="#000" />
          </svg>
          <svg width="13" height="13" viewBox="0 0 13 13" className="ml-[46px] mr-[26px]">
            <path d="M0.500 0.500l12 12M12.500 0.500l-12 12" stroke="#000" />
          </svg>
        </div>
      </div>

      <div className="flex h-[31px] shrink-0 items-center gap-[17px] bg-linear-to-r from-[#f5f5f5] to-[#fbfbfb] pl-[12px] text-[15px] text-[#111]">
        {menus.map((m) => (
          <span key={m}>{m}</span>
        ))}
      </div>

      <div className="flex h-[30px] shrink-0 bg-linear-to-r from-[#f5f5f5] to-[#fbfbfb] pb-[2px]">
        <Chunk className="ml-[3px] w-[617px]">
          <Dots />
          <Tools list="newfile open save print | cut copy paste del | undo redo | add v" />
          <Combo className="ml-[9px] h-[23px] w-[148px]">
            <span className="pl-[2px] font-['Liberation_Mono',monospace] text-[13px]">1:943,805</span>
          </Combo>
          <Sep />
          <Btn n="edit" active />
          <Sep />
          <Tools list="toc cat search tool py | model" />
          <Grip />
        </Chunk>
        <Chunk className="ml-[5px] w-[448px]">
          <Dots />
          <span className="ml-[3px] shrink-0 text-[14px]">编辑器(R)</span>
          <Caret />
          <Sep />
          <Tools list="dcursor dcursora | dline darc dpoly w dstar | dtri dsplit dcross dx dcurve | dtable dpeak | dform" />
          <Grip />
        </Chunk>
        <Chunk className="ml-[3px] w-[347px]">
          <Dots />
          <Tools list="ddot dcorner dext dtrim dangle | dstar dball | dflip dcurve dpencil dfour dcup | dmerge doct" />
          <Grip />
        </Chunk>
      </div>

      <div className="flex h-[29px] shrink-0 bg-linear-to-r from-[#f5f5f5] to-[#fbfbfb] pb-px">
        <Chunk className="ml-[3px] w-[525px]">
          <Dots />
          <Tools list="zoomin zoomout hand* globe | fin fout | back fwd | selel v ! filt ! arrow | info bolt msg | measure | bino route xy | clock | winzoom" />
          <Grip />
        </Chunk>
        <Chunk className="ml-[4px] w-[382px]">
          <Dots />
          <Tools list="dzi dzi dhand dbox dbox | dfin dfin | dback dfwd" />
          <Combo className="-ml-[2px] h-[23px] w-[60px]">
            <span className="ml-[3px] inline-block bg-[#0078d7] px-px text-[14px] leading-[18px] text-[#7d9cb8]">100%</span>
          </Combo>
          <Sep />
          <Btn n="layout" soft />
          <Tools list="dlayout lock pages" />
          <Grip />
        </Chunk>
        <Chunk className="ml-[4px] w-[570px]">
          <Dots />
          <span className="ml-[5px] shrink-0 text-[14px]">地理配准(G)</span>
          <Caret />
          <Sep />
          <div className="ml-[9px] flex h-[20px] w-[179px] shrink-0 items-center justify-end bg-[#c8c8c8] pr-[4px]">
            <ChevronDown size={14} color="#999" />
          </div>
          <Tools list="dgeo dgeo dgeoz dgeo dgeox dcal dcal2 drot w" />
          <div className="ml-[5px] h-[18px] w-[73px] shrink-0 border border-[#666] bg-white" />
          <Grip />
        </Chunk>
      </div>

      <div className="flex min-h-0 flex-1">
        <div className="flex w-[293px] shrink-0 flex-col pb-[2px]">
          <div className="flex h-[26px] w-[288px] shrink-0 items-center bg-linear-to-r from-[#c3d3e3] to-[#d5e1ee] pl-[4px] pr-[4px] text-[15px] text-[#111]">
            <span>内容列表</span>
            <svg width="10" height="12" viewBox="0 0 10 12" className="ml-auto">
              <path d="M2.500 1h5v5h-5zM1 6.500h8M5 7v5" fill="none" stroke="#000" strokeWidth="1.200" />
            </svg>
            <X size={12} strokeWidth={2.500} className="ml-[6px]" />
          </div>
          <div className="flex h-[23px] w-[288px] shrink-0 items-center bg-linear-to-b from-[#fafafa] to-[#ececec] pl-[4px]">
            <Btn n="tocdraw" soft />
            <Btn n="dbase" />
            <Btn n="dbase2" />
            <Btn n="dbase3" />
            <Sep />
            <Btn n="tlist" />
          </div>
          <div className="mt-[2px] flex w-[286px] flex-1 flex-col border-2 border-[#888] bg-white text-[15px]">
            <div className="flex h-[23px] items-center pl-[7px]">
              <Minus />
              <svg width="16" height="16" viewBox="0 0 16 16" className="ml-[6px]">
                <path d="M1 11l6-3h8l-6 3zM1 8l6-3h8L9 8zM1 5l6-3h8L9 5z" fill="#f3d58a" stroke="#b08a3a" />
              </svg>
              <span className="ml-[5px] font-bold">图层</span>
            </div>
            <div className="flex h-[23px] items-center pl-[25px]">
              <Minus />
              <div className="ml-[8px] flex h-[11px] w-[11px] items-center justify-center border border-black">
                <svg width="9" height="9" viewBox="0 0 9 9"><path d="M1 4.500l2.500 2.500L8 1.500" fill="none" stroke="#000" strokeWidth="1.600" /></svg>
              </div>
              <span className="ml-[6px] flex h-[22px] w-[61px] items-center justify-center bg-[#0078d7] text-white">merge3</span>
            </div>
            <div className="-ml-[2px] flex h-[23px] items-center"><Patch color="bg-[#ccfac8]" /></div>
            {layers.map((l) => (
              <div key={l.name}>
                <div className="flex h-[23px] items-center pl-[25px]">
                  <Minus />
                  <div className="ml-[8px] h-[11px] w-[11px] border border-black" />
                  <span className="ml-[7px]">{l.name}</span>
                </div>
                <div className="-ml-[2px] flex h-[23px] items-center"><Patch color={l.color} /></div>
              </div>
            ))}
          </div>
        </div>

        <div className="flex w-[1580px] shrink-0 flex-col border-t-2 border-[#6e6e6e]">
          <div className="flex min-h-0 flex-1 border-l border-[#888]">
            <MapView />
          </div>
          <div className="mt-[2px] flex h-[18px] shrink-0 items-center bg-[#f0f0f0] pl-px">
            <div className="flex h-full w-[22px] items-center justify-center bg-[#b5d8f5]">
              <svg width="12" height="12" viewBox="0 0 12 12"><rect x="1" y="1" width="10" height="10" fill="#d9e6a0" stroke="#555" /></svg>
            </div>
            <div className="flex h-full w-[21px] items-center justify-center">
              <svg width="12" height="12" viewBox="0 0 12 12"><path d="M2.500 1h7v10h-7z" fill="#fff" stroke="#222" /><path d="M4 4h4M4 6h4" stroke="#333" /></svg>
            </div>
            <div className="mx-[4px] h-[16px] w-px bg-[#aaa]" />
            <div className="flex w-[20px] justify-center text-[12px] font-bold leading-none text-[#1d5fa8]">↻</div>
            <div className="ml-[3px] flex w-[14px] justify-center gap-[2px]">
              <div className="h-[9px] w-[2px] bg-[#1d5fa8]" />
              <div className="h-[9px] w-[2px] bg-[#1d5fa8]" />
            </div>
            <div className="ml-[4px] flex w-[18px] justify-center"><ChevronLeft size={15} strokeWidth={3} color="#666" /></div>
            <div className="h-full w-[1444px] bg-[#c8c8c8]" />
            <div className="ml-[4px]"><ChevronRight size={15} strokeWidth={3} color="#555" /></div>
          </div>
        </div>

        <div className="flex w-[19px] shrink-0 flex-col border-t-2 border-[#6e6e6e] bg-[#f0f0f0] pb-[20px]">
          <div className="flex h-[20px] shrink-0 items-center justify-center"><ChevronUp size={15} strokeWidth={3} color="#555" /></div>
          <div className="w-[18px] flex-1 bg-[#c8c8c8]" />
          <div className="flex h-[22px] shrink-0 items-center justify-center"><ChevronDown size={15} strokeWidth={3} color="#555" /></div>
        </div>

        <div className="relative flex w-[28px] shrink-0 flex-col items-end bg-[#fafafa] pt-[3px]">
          <DockTab n="tool" label="ArcToolbox" mono className="h-[107px]" />
          <DockTab n="cat" label="目录" className="mt-[14px] h-[58px]" />
          <DockTab n="search" label="搜索" className="h-[59px]" />
          <DockTab n="dform2" label="创建要素" className="mt-[13px] h-[88px]" />
          <div className="absolute bottom-[27px] right-[2px] flex h-[64px] w-[9px] items-end justify-center rounded-full border-2 border-[#808080] bg-white pb-[2px]">
            <div className="h-[24px] w-[3px] rounded-full bg-[#f47a20]" />
          </div>
        </div>
      </div>

      <div className="relative flex h-[27px] shrink-0 items-center justify-end border-t border-[#f8f8f8] bg-[#efefef] pr-[173px] pt-[7px] text-[15px] text-[#111]">
        <span className="whitespace-pre">107.297  31.095 十进制度</span>
        <span className="absolute right-[10px] top-[-2px] font-['Liberation_Sans',sans-serif] text-[16px] text-[#c4c4c4]">https://blog.csdn.net/qq_39798423</span>
      </div>

      <AttributeTable />

      <div className="absolute left-[7px] top-[189px] h-[54px] w-[144px] border-[7px] border-[#ff3b3b]" />
      <div className="absolute left-[17px] top-[636px] h-[100px] w-[883px] border-[7px] border-[#ff3b3b]" />
    </div>
  );
}
